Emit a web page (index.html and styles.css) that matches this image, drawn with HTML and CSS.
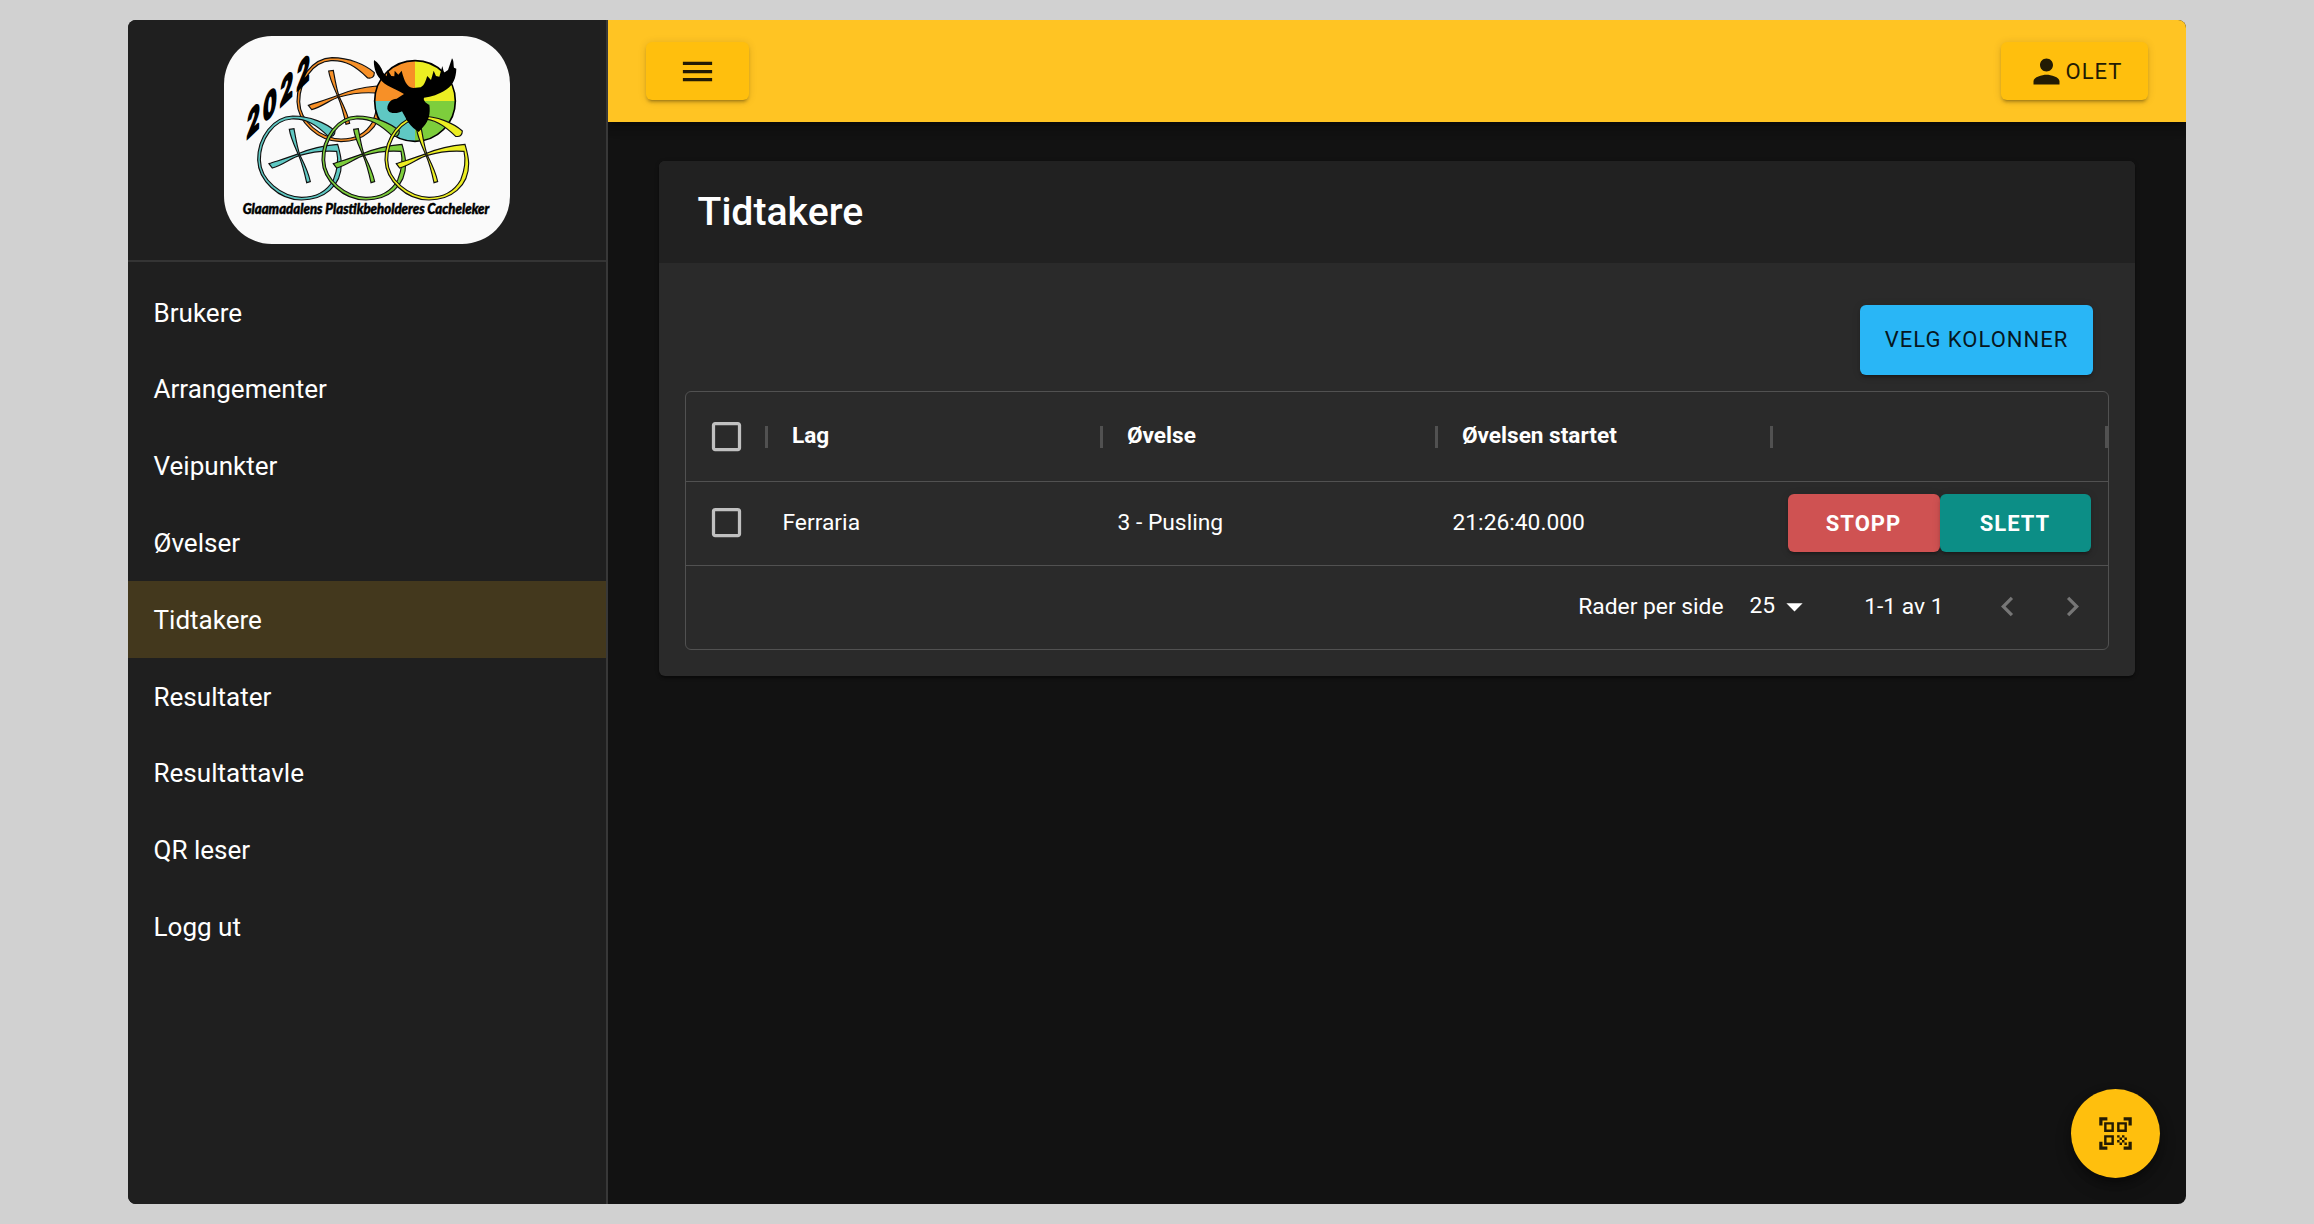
FILE: index.html
```html
<!DOCTYPE html>
<html lang="no">
<head>
<meta charset="utf-8">
<title>Tidtakere</title>
<link rel="stylesheet" href="styles.css">
</head>
<body>
<div class="window">
  <aside class="sidebar">
    <div class="brand">
      <svg class="logo" viewBox="12 18 858 624" role="img" aria-label="Glaamadalens Plastikbeholderes Cacheleker">
        <defs>
          <g id="cache-g">
            <path d="M345 303C320 280 270 258 218 258C160 260 113 320 113 390C115 450 175 510 245 510C310 510 365 470 364 400C363 375 356 355 353 343C320 346 280 352 238 370C200 385 170 393 147 401L157 414C190 405 215 382 240 376C280 364 320 362 350 364C356 390 352 420 340 450C320 485 285 502 245 502C185 500 122 450 121 390C121 330 160 270 215 267C260 265 290 285 325 319Q345 322 345 303Z"/>
            <path d="M208 298L222 296C228 330 232 355 240 376C252 400 265 425 271 455L260 458C254 430 246 400 236 376C225 350 212 325 208 298Z"/>
          </g>
        </defs>
        <use class="g g-orange" href="#cache-g" x="118" y="-175"/>
        <path class="orange" d="M585 213V92A121 121 0 0 0 464 213Z"/>
        <path class="yellow" d="M585 213V92A121 121 0 0 1 706 213Z"/>
        <path class="green" d="M585 213V334A121 121 0 0 0 706 213Z"/>
        <path class="teal" d="M585 213V334A121 121 0 0 1 464 213Z"/>
        <circle class="rim" cx="585" cy="213" r="121"/>
        <use class="g g-teal" href="#cache-g"/>
        <use class="g g-green" href="#cache-g" x="193"/>
        <use class="g g-yellow" href="#cache-g" x="382"/>
        <path d="M462 90C475 98 484 112 490 128L500 139L503 120L514 138L523 139L524 122L535 134L545 122C552 150 560 172 580 174L602 172C615 165 617 150 622 138L633 150L641 122L648 138L658 140L667 108L672 128L684 120L696 85C702 92 700 105 702 113L709 116C708 145 700 163 680 178C655 195 635 200 612 203C608 212 622 222 628 224C632 250 626 272 612 288L596 306L580 294C570 285 560 272 556 262L546 244C532 252 505 252 502 236C502 218 515 206 530 206L552 192C530 178 490 165 480 146C466 132 460 105 462 90Z"/>
        <text class="year" transform="translate(80 328) rotate(-44) skewX(-46) scale(1.2 1)">2022</text>
        <text class="motto" x="68" y="551" textLength="740" lengthAdjust="spacingAndGlyphs">Glaamadalens Plastikbeholderes Cacheleker</text>
      </svg>
    </div>
    <nav class="menu">
      <a class="menu-item">Brukere</a>
      <a class="menu-item">Arrangementer</a>
      <a class="menu-item">Veipunkter</a>
      <a class="menu-item">Øvelser</a>
      <a class="menu-item active">Tidtakere</a>
      <a class="menu-item">Resultater</a>
      <a class="menu-item">Resultattavle</a>
      <a class="menu-item">QR leser</a>
      <a class="menu-item">Logg ut</a>
    </nav>
  </aside>
  <div class="main">
    <header class="appbar">
      <button class="btn btn-amber btn-menu" aria-label="Meny">
        <svg class="icon-menu" viewBox="0 0 24 24"><path d="M3 18h18v-2H3v2zm0-5h18v-2H3v2zm0-7v2h18V6H3z"/></svg>
      </button>
      <button class="btn btn-amber btn-user">
        <svg class="icon-user" viewBox="0 0 24 24"><path d="M12 12c2.21 0 4-1.79 4-4s-1.79-4-4-4-4 1.79-4 4 1.79 4 4 4zm0 2c-2.67 0-8 1.34-8 4v2h16v-2c0-2.66-5.33-4-8-4z"/></svg>
        <span>OLET</span>
      </button>
    </header>
    <section class="card">
      <h1 class="card-title">Tidtakere</h1>
      <div class="card-body">
        <div class="toolbar"><button class="btn btn-blue">VELG KOLONNER</button></div>
        <div class="grid">
          <div class="row row-head">
            <div class="check"><svg viewBox="0 0 24 24"><path d="M19 5v14H5V5h14m0-2H5c-1.1 0-2 .9-2 2v14c0 1.100.9 2 2 2h14c1.100 0 2-.9 2-2V5c0-1.100-.9-2-2-2z"/></svg></div>
            <div class="cell">Lag</div>
            <div class="cell">Øvelse</div>
            <div class="cell">Øvelsen startet</div>
            <div class="cell"></div>
          </div>
          <div class="row row-data">
            <div class="check"><svg viewBox="0 0 24 24"><path d="M19 5v14H5V5h14m0-2H5c-1.1 0-2 .9-2 2v14c0 1.100.9 2 2 2h14c1.100 0 2-.9 2-2V5c0-1.100-.9-2-2-2z"/></svg></div>
            <div class="cell">Ferraria</div>
            <div class="cell">3 - Pusling</div>
            <div class="cell">21:26:40.000</div>
            <div class="cell actions">
              <button class="btn btn-red">STOPP</button>
              <button class="btn btn-teal">SLETT</button>
            </div>
          </div>
          <footer class="pager">
            <span class="pager-label">Rader per side</span>
            <span class="pager-size">25</span>
            <svg class="icon-drop" viewBox="0 0 24 24"><path d="M7 10l5 5 5-5z"/></svg>
            <span class="pager-range">1-1 av 1</span>
            <svg class="icon-page" viewBox="0 0 24 24"><path d="M15.410 16.590L10.830 12l4.580-4.590L14 6l-6 6 6 6z"/></svg>
            <svg class="icon-page" viewBox="0 0 24 24"><path d="M8.590 16.590L13.170 12 8.590 7.410 10 6l6 6-6 6z"/></svg>
          </footer>
        </div>
      </div>
    </section>
  </div>
  <button class="fab" aria-label="QR leser">
    <svg viewBox="0 0 24 24"><path d="M9.500 6.500v3h-3v-3h3M11 5H5v6h6V5zm-1.500 9.500v3h-3v-3h3M11 13H5v6h6v-6zm6.500-6.500v3h-3v-3h3M19 5h-6v6h6V5zm-6 8h1.500v1.500H13V13zm1.500 1.500H16V16h-1.500v-1.500zM16 13h1.500v1.500H16V13zm-3 3h1.500v1.500H13V16zm1.500 1.500H16V19h-1.500v-1.500zM16 16h1.500v1.500H16V16zm1.500-1.500H19V16h-1.500v-1.500zm0 3H19V19h-1.500v-1.500zM22 7h-2V4h-3V2h5v5zm0 15v-5h-2v3h-3v2h5zM2 22h5v-2H4v-3H2v5zM2 2v5h2V4h3V2H2z"/></svg>
  </button>
</div>
</body>
</html>
```
FILE: styles.css
```css
* { box-sizing: border-box; }
body {
  margin: 0;
  height: 1224px;
  padding: 20px 128px;
  overflow: hidden;
  background: #d1d1d1;
  color: #fff;
  font-family: Roboto, "Liberation Sans", sans-serif;
}
.window {
  position: relative;
  display: flex;
  height: 1184px;
  border-radius: 8px;
  overflow: hidden;
  background: #121212;
}
.sidebar {
  position: relative;
  z-index: 1;
  width: 480px;
  flex: none;
  background: #1f1f1f;
  border-right: 2px solid #383838;
}
.brand {
  height: 242px;
  padding: 16px 0 0 96px;
  border-bottom: 2px solid #343434;
}
.logo {
  display: block;
  width: 286px;
  height: 208px;
  border-radius: 48px;
  background: #fafafa;
}
.g { stroke: #111; stroke-width: 3.500; }
.g-orange, .orange { fill: #f79027; }
.g-yellow, .yellow { fill: #ecee22; }
.g-green, .green { fill: #7dce3c; }
.g-teal, .teal { fill: #5fc8c3; }
.rim { fill: none; stroke: #000; stroke-width: 5; }
.year { font: 900 74px Lato, sans-serif; letter-spacing: 15px; stroke: #000; stroke-width: 6; }
.motto { font: italic 900 44px Lato, sans-serif; stroke: #000; stroke-width: 1.500; }

.menu { padding-top: 12.300px; }
.menu-item {
  display: flex;
  align-items: center;
  height: 76.800px;
  padding-left: 25.500px;
  font-size: 26.050px;
}
.menu-item.active { background: #43381d; }

.main { flex: 1; }
.appbar {
  display: flex;
  align-items: center;
  justify-content: space-between;
  height: 102px;
  padding: 0 38px;
  background: #ffc423;
  box-shadow: 0 3px 6px -1px rgba(0,0,0,.3), 0 6px 8px rgba(0,0,0,.18), 0 2px 16px rgba(0,0,0,.14);
}
.btn {
  display: flex;
  align-items: center;
  justify-content: center;
  padding: 0;
  border: 0;
  border-radius: 6px;
  font: 500 22px Roboto, "Liberation Sans", sans-serif;
  letter-spacing: 1px;
  box-shadow: 0 4px 2px -3px rgba(0,0,0,.2), 0 3px 3px rgba(0,0,0,.14), 0 1px 8px rgba(0,0,0,.12);
}
.btn-amber { height: 58px; background: #ffbf0d; color: #231b04; font-weight: 400; }
.btn-menu { width: 103px; }
.btn-user { width: 147px; }
.btn svg { fill: currentColor; }
.icon-menu { width: 39px; height: 39px; }
.icon-user { width: 39px; height: 39px; }

.card {
  width: 1476px;
  height: 515px;
  margin: 39px 0 0 51px;
  border-radius: 6px;
  background: #2a2a2a;
  overflow: hidden;
  box-shadow: 0 3px 2px -1px rgba(0,0,0,.3), 0 1px 4px rgba(0,0,0,.3);
}
.card-title {
  display: flex;
  align-items: center;
  height: 102px;
  margin: 0;
  padding: 0 0 1px 38.500px;
  background: #212121;
  font-size: 39.200px;
  font-weight: 500;
}
.card-body { padding: 42px 26px 0; }
.toolbar { display: flex; justify-content: flex-end; padding-right: 16px; }
.btn-blue { width: 233px; height: 70px; padding-bottom: 1px; background: #29b6f6; color: #07171e; font-weight: 400; }
.grid {
  height: 259px;
  margin-top: 16px;
  border: 1px solid #515151;
  border-radius: 6px;
  font-size: 22.800px;
}
.row { display: flex; align-items: center; border-bottom: 1px solid #515151; }
.row-head { height: 90px; font-size: 22.600px; font-weight: 700; }
.row-data { height: 84px; padding-bottom: 2px; }
.check { width: 81px; flex: none; display: flex; justify-content: center; }
.check svg { width: 39px; height: 39px; fill: #c0c0c0; }
.cell { width: 335px; flex: none; padding-left: 15.500px; }
.row-head .cell {
  height: 22px;
  line-height: 20px;
  padding-left: 24px;
  border-left: 3px solid #515151;
  margin-left: -2px;
  margin-right: 2px;
}
.row-head .cell:last-child { border-right: 3px solid #515151; width: 338px; }
.actions { display: flex; }
.btn-red, .btn-teal { width: 152px; height: 58px; padding-top: 1px; color: #fff; font-weight: 700; }
.btn-red { background: #cf5252; }
.btn-teal { width: 151px; background: #0c8e86; }
.pager { display: flex; align-items: center; justify-content: flex-end; height: 82px; padding: 0 16px 1px 0; }
.pager-size { margin-left: 26px; padding-bottom: 2px; }
.pager-range { margin: 0 44.500px 0 50px; }
.icon-drop { width: 39px; height: 39px; fill: #fff; }
.icon-page { width: 39px; height: 39px; margin-right: 26px; fill: #767676; }
.icon-page:last-child { margin-right: 0; }

.fab {
  position: absolute;
  right: 26px;
  bottom: 26px;
  width: 89px;
  height: 89px;
  display: grid;
  place-items: center;
  padding: 0;
  border: 0;
  border-radius: 50%;
  background: #ffbf0d;
  box-shadow: 0 5px 8px -1px rgba(0,0,0,.3), 0 9px 16px rgba(0,0,0,.25);
}
.fab svg { width: 39px; height: 39px; fill: #231b04; }
```
